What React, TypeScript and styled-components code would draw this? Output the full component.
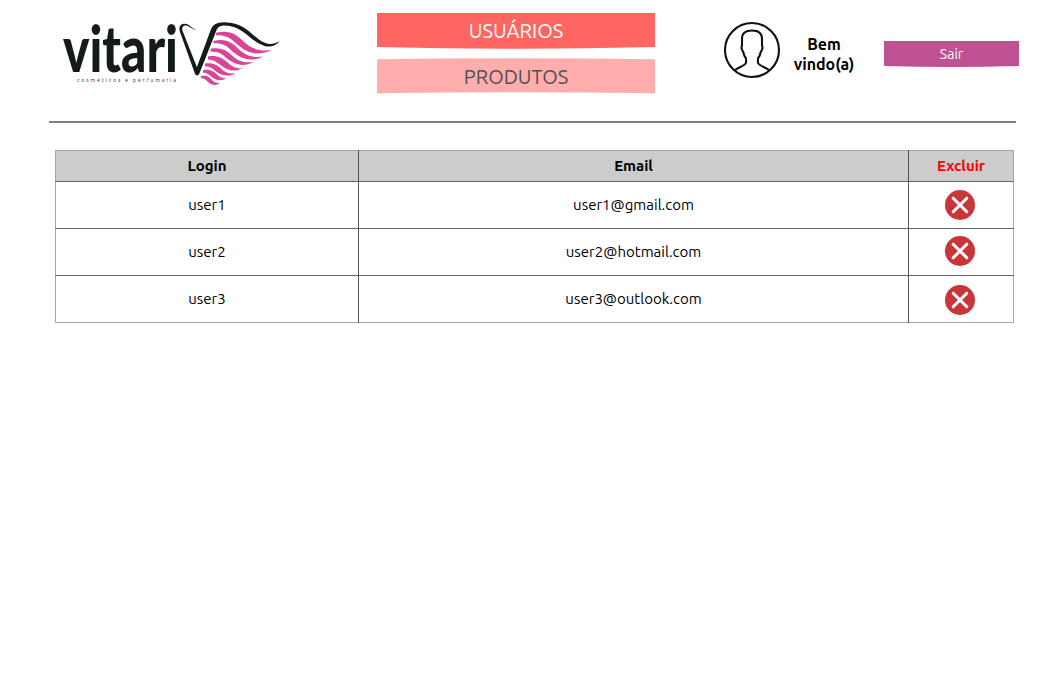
import React from "react";
import styled, { createGlobalStyle } from "styled-components";

const GlobalStyle = createGlobalStyle`
  * { box-sizing: border-box; }
  body {
    margin: 0;
    background: #fff;
    color: #000;
    font-family: Ubuntu, "Noto Sans", sans-serif;
  }
`;

const Page = styled.div`
  width: 1054px;
  min-height: 685px;
  padding: 0 35px 0 49px;
`;

const Header = styled.header`
  display: flex;
  align-items: flex-start;
  height: 121px;
  padding-top: 13px;
`;

const LogoLink = styled.div`
  width: 328px;
  margin-top: -13px;
  padding-left: 11px;
  svg { display: block; }
`;

const Nav = styled.nav`
  display: flex;
  flex-direction: column;
  gap: 9px;
  width: 278px;
`;

const NavButton = styled.button<{ $active?: boolean }>`
  height: 36px;
  padding: ${(p) => (p.$active ? "0 0 1px" : "1px 0 0")};
  border: 0;
  background: ${(p) => (p.$active ? "#ff6561" : "#ffadad")};
  color: ${(p) => (p.$active ? "#fff" : "#505050")};
  clip-path: ${(p) =>
    p.$active
      ? 'path("M0 0H278V34Q139 37.6 0 34Z")'
      : 'path("M0 1.2Q139 -0.8 278 1.2V35.2Q139 33.2 0 35.2Z")'};
  font-family: inherit;
  font-size: 20px;
  line-height: 34px;
`;

const User = styled.div`
  display: flex;
  align-items: center;
  gap: 11px;
  margin: 8px 0 0 69px;
  svg { display: block; }
`;

const Welcome = styled.div`
  width: 64px;
  padding-top: 7px;
  text-align: center;
  font-size: 16px;
  font-weight: 700;
  line-height: 20px;
`;

const Logout = styled.button`
  width: 135px;
  height: 27px;
  margin: 28px 0 0 28px;
  padding: 0;
  border: 0;
  background: #be5192;
  color: #fff;
  clip-path: path("M0 0H135V25Q67.5 27 0 25Z");
  font-family: inherit;
  font-size: 14px;
  line-height: 25px;
`;

const Divider = styled.hr`
  width: 967px;
  height: 2px;
  margin: 0 0 27px;
  border: 0;
  background: #808080;
`;

const Table = styled.table`
  width: 959px;
  margin-left: 6px;
  border-collapse: collapse;
  table-layout: fixed;
  border: 1px solid #a6a6a6;
  font-size: 15px;
  text-align: center;
`;

const Row = styled.tr<{ $head?: boolean }>`
  height: ${(p) => (p.$head ? 31 : 47)}px;
  background: ${(p) => (p.$head ? "#ccc" : "#fff")};
  & + & { border-top: 1px solid #666; }
`;

const HeadCell = styled.th<{ $danger?: boolean }>`
  padding: 0;
  line-height: 20px;
  color: ${(p) => (p.$danger ? "#f00" : "#000")};
  border-bottom: 1px solid #666;
  & + & { border-left: 1px solid #555; }
`;

const Cell = styled.td`
  padding: 0;
  line-height: 20px;
  & + & { border-left: 1px solid #555; }
`;

const DeleteButton = styled.button<{ $shift: number }>`
  display: block;
  width: 30px;
  height: 30px;
  margin: 0 auto;
  padding: 0;
  border: 0;
  background: none;
  transform: translate(-1px, ${(p) => p.$shift}px);
  svg { display: block; }
`;

const Logo = () => (
  <svg width="225" height="95" viewBox="60 0 225 95">
    <text
      x="63"
      y="72"
      textLength="115"
      lengthAdjust="spacingAndGlyphs"
      fontFamily="Lato, sans-serif"
      fontWeight="900"
      fontSize="65"
      fill="#151a1b"
    >
      vitari
    </text>
    <text
      x="77"
      y="81.5"
      textLength="99"
      fontFamily="Ubuntu, Noto Sans, sans-serif"
      fontSize="5.5"
      fill="#333"
    >
      cosméticos e perfumaria
    </text>
    <g fill="#151a1b">
      <path d="M196.8 29.5C192.5 30.3 189.5 25.8 186 25.5C182.5 25.3 181.6 28 182.8 31.5L198 70L196.7 75.3C195.8 75.3 195.2 74.3 194.7 73L180 32C178.7 28 179.5 24.3 184 23.7C189.5 23.2 191.5 28.8 196.8 29.5Z" />
      <path d="M196.7 75.3C195.5 74 195.5 71 196 69.5L210.5 30.5C212.5 25 216 22.3 224.3 22.3C246 22 253 38.5 265.5 43.1C271 45.2 275 43.3 279.7 41.3C275.5 46 270.5 47.5 264.5 45.9C250 41.5 243 25.5 225 25.5C219.5 25.5 217.2 27.5 215.8 32L199.6 73C198.8 75 197.8 75.8 196.7 75.3Z" />
    </g>
    <g fill="#d94398">
      <path d="M216 32.8C230 29.5 236 35 242 40C251 49 259 51.5 271.5 50C260 56 248 54.5 237 44C229 36.5 225 35 216 35.2Z" />
      <path d="M213.5 41C226 38 232 43 238 48.5C246 56 253 58 263 56.5C252 62 243 60 233 52C226 45 222 43 213.5 43.3Z" />
      <path d="M210.5 48.7C221 47 227 50.5 232 55.5C239 62 245 63 253.5 62C244 67 236 65.5 227 58.5C221 53 218 51.7 210.5 51.5Z" />
      <path d="M208 56.5C217 55 222 58 227 62C233 67.2 236 69 242.5 68.3C234 72.5 228 70.5 221 65.5C216 61.5 213.5 59.8 208 59.5Z" />
      <path d="M205 63.6C213 62.4 217 65 221 68.5C225 72.2 228 74 235.5 73.5C229 77 222 76 216 71.5C211 67.3 209 66.3 205 66.5Z" />
      <path d="M203 70C210 69 213.5 71 217 74.5C219.5 77 222 78.5 226 78.2C221 81.5 216 80.5 211 76.5C207.5 73.3 206.5 72.7 203 72.7Z" />
      <path d="M201 76C207 74.8 209.5 77 212 80C214.5 82.5 216.5 83.4 220 83C215.5 86.5 211 85 207.5 81.5C204.5 78.8 203.5 78.3 201 78.3Z" />
    </g>
  </svg>
);

const Avatar = () => (
  <svg width="57" height="58" viewBox="0 0 57 58" fill="none" stroke="#111" strokeWidth="2.1">
    <circle cx="28" cy="29" r="27" />
    <path d="M10.5 49.5C14 46.5 20 45 21.7 42.5C22.5 41 22 39.5 22 37.5C20.5 35.5 19.7 33.5 19.2 30.7C17.5 29 17 27 18 24.5V18C18 12 21.5 9.5 28 9.5S38 12 38 18V24.5C39 27 38.5 29 36.8 30.7C36.3 33.5 35.5 35.5 34 37.5C34 39.5 33.5 41 34.3 42.5C36 45 42 46.5 45.5 49.5" />
  </svg>
);

const DeleteIcon = () => (
  <svg width="30" height="30" viewBox="0 0 30 30">
    <circle cx="15" cy="15" r="15" fill="#c83637" />
    <path d="M8.2 8.2L21.8 21.8M21.8 8.2L8.2 21.8" stroke="#fff" strokeWidth="3" strokeLinecap="round" />
  </svg>
);

const users = [
  { login: "user1", email: "user1@gmail.com", shift: 0 },
  { login: "user2", email: "user2@hotmail.com", shift: -1 },
  { login: "user3", email: "user3@outlook.com", shift: 1 },
];

export default function App() {
  return (
    <Page>
      <GlobalStyle />
      <Header>
        <LogoLink><Logo /></LogoLink>
        <Nav>
          <NavButton $active>USUÁRIOS</NavButton>
          <NavButton>PRODUTOS</NavButton>
        </Nav>
        <User>
          <Avatar />
          <Welcome>Bem vindo(a)</Welcome>
        </User>
        <Logout>Sair</Logout>
      </Header>
      <Divider />
      <Table>
        <colgroup>
          <col style={{ width: 303 }} />
          <col style={{ width: 550 }} />
          <col />
        </colgroup>
        <thead>
          <Row $head>
            <HeadCell>Login</HeadCell>
            <HeadCell>Email</HeadCell>
            <HeadCell $danger>Excluir</HeadCell>
          </Row>
        </thead>
        <tbody>
          {users.map((u) => (
            <Row key={u.login}>
              <Cell>{u.login}</Cell>
              <Cell>{u.email}</Cell>
              <Cell>
                <DeleteButton $shift={u.shift} aria-label={`Excluir ${u.login}`}>
                  <DeleteIcon />
                </DeleteButton>
              </Cell>
            </Row>
          ))}
        </tbody>
      </Table>
    </Page>
  );
}
